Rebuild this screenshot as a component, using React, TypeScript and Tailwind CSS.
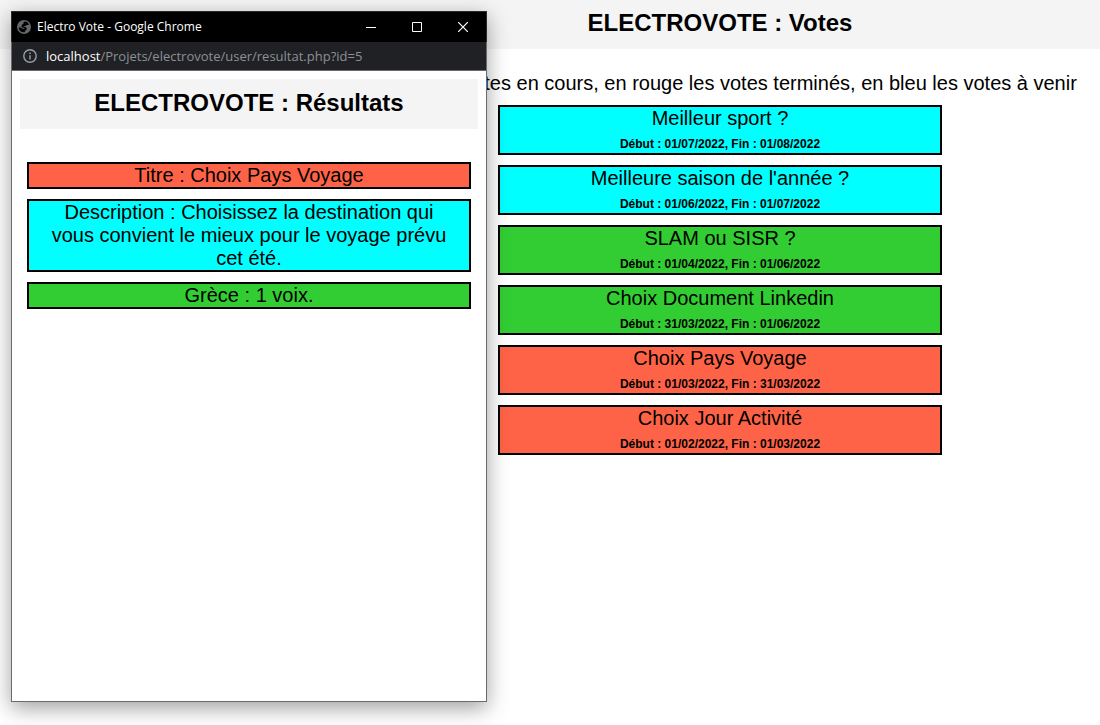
type Tone = 'upcoming' | 'open' | 'closed';

const toneClass: Record<Tone, string> = {
  upcoming: 'bg-[#00ffff]',
  open: 'bg-[#32cd32]',
  closed: 'bg-[#ff6347]',
};

interface Vote {
  id: number;
  title: string;
  start: string;
  end: string;
  tone: Tone;
}

const votes: Vote[] = [
  { id: 1, title: 'Meilleur sport ?', start: '01/07/2022', end: '01/08/2022', tone: 'upcoming' },
  { id: 2, title: "Meilleure saison de l'année ?", start: '01/06/2022', end: '01/07/2022', tone: 'upcoming' },
  { id: 3, title: 'SLAM ou SISR ?', start: '01/04/2022', end: '01/06/2022', tone: 'open' },
  { id: 4, title: 'Choix Document Linkedin', start: '31/03/2022', end: '01/06/2022', tone: 'open' },
  { id: 5, title: 'Choix Pays Voyage', start: '01/03/2022', end: '31/03/2022', tone: 'closed' },
  { id: 6, title: 'Choix Jour Activité', start: '01/02/2022', end: '01/03/2022', tone: 'closed' },
];

const results: { text: string; tone: Tone }[] = [
  { text: 'Titre : Choix Pays Voyage', tone: 'closed' },
  {
    text: 'Description : Choisissez la destination qui vous convient le mieux pour le voyage prévu cet été.',
    tone: 'upcoming',
  },
  { text: 'Grèce : 1 voix.', tone: 'open' },
];

function VoteCard({ vote }: { vote: Vote }) {
  return (
    <li>
      <a
        href={`#resultat-${vote.id}`}
        className={`flex h-[50px] flex-col items-center border-2 border-black ${toneClass[vote.tone]}`}
      >
        <span className="text-xl leading-[23px]">{vote.title}</span>
        <span className="pt-1 text-xs leading-5 font-bold">
          Début : {vote.start}, Fin : {vote.end}
        </span>
      </a>
    </li>
  );
}

function GlobeIcon() {
  return (
    <svg viewBox="0 0 14 14" className="size-3.5" aria-hidden="true">
      <circle cx="7" cy="7" r="7" fill="#64676b" />
      <path
        d="M7.6 1.6C9.6 1.7 11.2 2.8 12 4.4L11 5H9.4L8.6 6H7L6.6 6.8H8.2L9.6 8V9.4L8.4 10.6 7.6 12.3C4.4 12.7 1.9 10.6 1.6 7.6H4L5.2 8.8H7.4V8L5.4 7.6 4.4 6.4 4.8 4.8 6.4 4V2.6Z"
        fill="#000"
      />
    </svg>
  );
}

function InfoIcon() {
  return (
    <svg viewBox="0 0 14 14" className="size-3.5" fill="none" stroke="#9aa0a6" strokeWidth="1.4" aria-hidden="true">
      <circle cx="7" cy="7" r="6.2" />
      <path d="M7 6.2V10.4M7 3.5V5" />
    </svg>
  );
}

function WindowControls() {
  return (
    <div className="flex h-full text-white">
      <button type="button" aria-label="Réduire" className="flex w-[46px] items-center justify-center">
        <svg viewBox="0 0 10 10" className="size-2.5" fill="none" stroke="currentColor" aria-hidden="true">
          <path d="M0 5.5H10" />
        </svg>
      </button>
      <button type="button" aria-label="Agrandir" className="flex w-[46px] items-center justify-center">
        <svg viewBox="0 0 10 10" className="size-2.5" fill="none" stroke="currentColor" aria-hidden="true">
          <path d="M.5 .5H9.5V9.5H.5Z" />
        </svg>
      </button>
      <button type="button" aria-label="Fermer" className="flex w-[46px] items-center justify-center">
        <svg viewBox="0 0 10 10" className="size-2.5" fill="none" stroke="currentColor" strokeWidth="1.2" aria-hidden="true">
          <path d="M0 0 10 10M10 0 0 10" />
        </svg>
      </button>
    </div>
  );
}

function ResultWindow() {
  return (
    <section
      aria-label="Electro Vote"
      className="absolute top-[11px] left-[11px] flex min-h-[691px] w-[476px] flex-col border border-[#6b6b6b] bg-white shadow-[0_6px_20px_rgba(0,0,0,0.38)]"
    >
      <div className="-mx-px -mt-px flex h-[31px] items-center justify-between border border-b-0 border-[#2b2b2b] bg-black pl-[5px] font-['Open_Sans','Noto_Sans',sans-serif]">
        <div className="flex items-center gap-1.5 text-xs text-white">
          <GlobeIcon />
          <span>Electro Vote - Google Chrome</span>
        </div>
        <WindowControls />
      </div>
      <div className="flex h-[29px] items-center gap-[9px] border-b border-[#6b6b6b] bg-[#202124] pl-[11px] font-['Open_Sans','Noto_Sans',sans-serif] text-[13px] text-[#8d9095]">
        <InfoIcon />
        <span className="pt-0.5">
          <span className="text-white">localhost</span>/Projets/electrovote/user/resultat.php?id=5
        </span>
      </div>
      <div className="p-2">
        <h2 className="bg-[#f4f4f4] pb-0.5 text-center text-2xl leading-12 font-bold">ELECTROVOTE : Résultats</h2>
        <ul className="mt-[33px] flex flex-col gap-2.5 px-[7px]">
          {results.map((result) => (
            <li
              key={result.text}
              className={`border-2 border-black px-4 text-center text-xl leading-[23px] ${toneClass[result.tone]}`}
            >
              {result.text}
            </li>
          ))}
        </ul>
      </div>
    </section>
  );
}

export default function App() {
  return (
    <div className="relative min-h-screen overflow-hidden bg-white font-['Liberation_Sans',Arial,sans-serif] text-black">
      <header className="bg-[#f4f4f4] pl-[340px]">
        <h1 className="pb-1 text-center text-2xl leading-[45px] font-bold">ELECTROVOTE : Votes</h1>
      </header>
      <main className="flex flex-col items-center pt-[23px] pl-[340px]">
        <p className="text-center text-xl leading-[23px]">
          En vert les votes en cours, en rouge les votes terminés, en bleu les votes à venir
        </p>
        <ul className="mt-2.5 flex w-full max-w-[444px] flex-col gap-2.5">
          {votes.map((vote) => (
            <VoteCard key={vote.id} vote={vote} />
          ))}
        </ul>
      </main>
      <ResultWindow />
    </div>
  );
}
